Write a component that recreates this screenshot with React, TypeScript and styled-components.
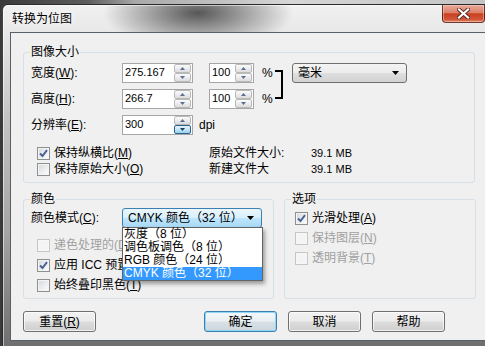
import React from 'react';
import styled, { createGlobalStyle, css } from 'styled-components';

const Global = createGlobalStyle`
  html, body { margin: 0; padding: 0; }
  body {
    background: #6a6a6a;
    font-family: "Liberation Sans", "Noto Sans CJK SC", sans-serif;
  }
`;

const CJK = `"Liberation Sans", "Noto Sans CJK SC", sans-serif`;

const Screen = styled.div`
  width: 485px;
  height: 346px;
  overflow: hidden;
  background: linear-gradient(90deg, #3a3a3a 0, #5c5c5c 18%, #a9a9a9 28%, #d6d6d6 60%, #c4c4c4 100%);
`;

const Window = styled.div`
  margin: 4px 0 0 2px;
  width: 490px;
  height: 360px;
  box-sizing: border-box;
  border: 1px solid rgba(25, 25, 25, 0.8);
  border-radius: 6px 6px 0 0;
  display: flex;
  flex-direction: column;
  background:
    radial-gradient(ellipse 95px 36px at 195px 8px, rgba(60, 60, 60, 0.85), rgba(60, 60, 60, 0) 100%),
    linear-gradient(180deg, #f1f1f1 0px, #e8e8e8 26px, #c4c4c4 110px, #a3a3a3 230px, #6f6f6f 340px);
  box-shadow: inset 1px 1px 0 rgba(255, 255, 255, 0.55);
`;

const TitleBar = styled.div`
  height: 27px;
  flex: none;
  display: flex;
  align-items: center;
  padding-left: 9px;
`;

const Title = styled.span`
  font-family: ${CJK};
  font-size: 12px;
  line-height: 14px;
  color: #000;
  text-shadow: 0 0 6px rgba(255, 255, 255, 0.95), 0 0 10px rgba(255, 255, 255, 0.8);
`;

const CloseButton = styled.div`
  align-self: flex-start;
  margin-left: auto;
  margin-right: 6px;
  width: 43px;
  height: 18px;
  box-sizing: border-box;
  border: 1px solid rgba(70, 20, 15, 0.75);
  border-top: none;
  border-radius: 0 0 4px 4px;
  background: linear-gradient(180deg, #e9aa9c 0%, #dc8069 45%, #c9401f 52%, #d2573a 85%, #e08a6a 100%);
  display: flex;
  align-items: center;
  justify-content: center;
  box-shadow: inset 0 0 0 1px rgba(255, 220, 210, 0.45);
`;

const Client = styled.div`
  margin-left: 7px;
  height: 309px;
  flex: none;
  box-sizing: border-box;
  border: 1px solid #58616a;
  background: #f0f0f0;
  padding: 12px 0 0 12px;
  font-family: ${CJK};
  font-size: 12px;
  color: #000;
`;

const Content = styled.div`
  width: 453px;
  display: flex;
  flex-direction: column;
`;

const Group = styled.fieldset<{ $w: number; $h: number; $pl?: number }>`
  margin: 0;
  box-sizing: border-box;
  width: ${p => p.$w}px;
  height: ${p => p.$h}px;
  border: 1px solid #d5dfe5;
  border-radius: 3px;
  padding: 0 7px 0 ${p => p.$pl ?? 7}px;
  min-width: 0;
`;

const Legend = styled.legend`
  padding: 0 1px;
  margin-left: -1px;
  font-size: 12px;
  line-height: 14px;
`;

const SizeGrid = styled.div`
  display: grid;
  grid-template-columns: 91px 87px 53px 13px 17px 115px;
  grid-template-rows: 20px 20px 20px;
  row-gap: 6px;
  align-items: center;
  margin-top: 4px;
`;

const Label = styled.span<{ $disabled?: boolean }>`
  font-size: 12px;
  line-height: 14px;
  white-space: nowrap;
  color: ${p => (p.$disabled ? '#a0a0a0' : '#000')};
`;

const RowLabel = styled(Label)`
  grid-column: 1;
`;

const Key = styled.span`
  text-decoration: underline;
  text-underline-offset: 1px;
`;

const SpinBox = styled.div<{ $w: number }>`
  width: ${p => p.$w}px;
  height: 20px;
  box-sizing: border-box;
  border: 1px solid #a6a6a6;
  background: #fff;
  display: flex;
  align-items: stretch;
`;

const SpinValue = styled.span`
  flex: 1;
  padding-left: 2px;
  font-family: "Liberation Sans", sans-serif;
  font-size: 11px;
  line-height: 17px;
  color: #000;
`;

const SpinCol = styled.div`
  width: 17px;
  display: flex;
  flex-direction: column;
  margin-right: 1px;
`;

const SpinBtn = styled.div<{ $pressed?: boolean }>`
  flex: 1;
  box-sizing: border-box;
  border: 1px solid #b9b9b9;
  border-radius: 2px;
  background: linear-gradient(180deg, #fbfbfb 0%, #ececec 50%, #dcdcdc 100%);
  display: flex;
  align-items: center;
  justify-content: center;
  ${p =>
    p.$pressed &&
    css`
      border-color: #2c628b;
      background: linear-gradient(180deg, #e5f4fc 0%, #c4e5f6 50%, #98d1ef 100%);
    `}
`;

const Unit = styled.span`
  font-family: "Liberation Sans", sans-serif;
  font-size: 12px;
  line-height: 14px;
`;

const Bracket = styled.div`
  grid-column: 5;
  grid-row: 1 / span 2;
  align-self: start;
  margin-top: 7px;
  width: 8px;
  height: 29px;
  box-sizing: border-box;
  border: 2px solid #000;
  border-left: none;
`;

const DpiCell = styled.div`
  grid-column: 2 / span 2;
  display: flex;
  align-items: center;
  gap: 6px;
`;

const Combo = styled.div<{ $w: number; $focus?: boolean }>`
  position: relative;
  width: ${p => p.$w}px;
  height: 20px;
  box-sizing: border-box;
  border: 1px solid #707070;
  border-radius: 3px;
  background: linear-gradient(180deg, #f4f4f4 0%, #ececec 48%, #dedede 52%, #d2d2d2 100%);
  display: flex;
  align-items: center;
  justify-content: space-between;
  padding: 0 7px 0 5px;
  font-size: 12px;
  line-height: 14px;
  white-space: nowrap;
  ${p =>
    p.$focus &&
    css`
      border-color: #3c7fb1;
      background: linear-gradient(180deg, #eaf6fd 0%, #d9f0fc 48%, #bee6fd 52%, #a7d9f5 100%);
    `}
`;

const Popup = styled.div`
  position: absolute;
  top: 18px;
  left: -1px;
  width: 141px;
  box-sizing: border-box;
  border: 1px solid #646464;
  background: #fff;
  box-shadow: 2px 3px 4px rgba(0, 0, 0, 0.35);
  z-index: 5;
  padding: 0;
`;

const PopupItem = styled.div<{ $sel?: boolean }>`
  height: 13px;
  line-height: 13px;
  padding-left: 1px;
  font-size: 12px;
  white-space: nowrap;
  color: #000;
  ${p =>
    p.$sel &&
    css`
      background: #3399ff;
      color: #fff;
    `}
`;

const CheckGrid = styled.div`
  display: grid;
  grid-template-columns: 172px 102px auto;
  grid-auto-rows: 16px;
  align-items: center;
  margin: 10px 0 0 6px;
`;

const CheckList = styled.div<{ $mt: number; $ml: number }>`
  display: flex;
  flex-direction: column;
  margin: ${p => p.$mt}px 0 0 ${p => p.$ml}px;
`;

const CheckRow = styled.div<{ $h: number }>`
  height: ${p => p.$h}px;
  display: flex;
  align-items: center;
  gap: 4px;
`;

const Box = styled.span<{ $disabled?: boolean }>`
  width: 13px;
  height: 13px;
  flex: none;
  box-sizing: border-box;
  border: 1px solid ${p => (p.$disabled ? '#c6c6c6' : '#8e8f8f')};
  background: ${p =>
    p.$disabled
      ? '#f4f4f4'
      : 'linear-gradient(135deg, #d3d6db 0%, #eceef0 55%, #fdfdfd 100%)'};
  box-shadow: inset 0 0 0 1px ${p => (p.$disabled ? '#f7f7f7' : '#f4f4f4')};
  display: flex;
  align-items: center;
  justify-content: center;
`;

const Info = styled.span<{ $small?: boolean }>`
  font-size: ${p => (p.$small ? 11 : 12)}px;
  line-height: 14px;
  white-space: nowrap;
  font-family: "Liberation Sans", "Noto Sans CJK SC", sans-serif;
`;

const GroupRow = styled.div`
  display: flex;
  gap: 10px;
  margin-top: 9px;
`;

const ModeRow = styled.div`
  display: flex;
  align-items: center;
  height: 20px;
  margin-top: 2px;
`;

const ModeLabel = styled(Label)`
  width: 91px;
`;

const ButtonRow = styled.div`
  display: flex;
  gap: 11px;
  margin-top: 12px;
`;

const Button = styled.div<{ $default?: boolean; $push?: number }>`
  width: 73px;
  height: 21px;
  box-sizing: border-box;
  border: 1px solid #707070;
  border-radius: 3px;
  background: linear-gradient(180deg, #f2f2f2 0%, #ebebeb 48%, #dddddd 52%, #cfcfcf 100%);
  box-shadow: inset 0 0 0 1px rgba(255, 255, 255, 0.7);
  display: flex;
  align-items: center;
  justify-content: center;
  font-size: 12px;
  line-height: 14px;
  margin-left: ${p => p.$push ?? 0}px;
  ${p =>
    p.$default &&
    css`
      border-color: #3c7fb1;
      box-shadow: inset 0 0 0 1px #8fd7f7;
      background: linear-gradient(180deg, #f3f7f9 0%, #e9eff2 48%, #d9e1e6 52%, #ccd6dc 100%);
    `}
`;

const ArrowUp = () => (
  <svg width="5" height="3" viewBox="0 0 5 3">
    <path d="M0 3 L2.5 0 L5 3 Z" fill="#5a6d96" />
  </svg>
);

const ArrowDown = ({ color = '#5a6d96' }: { color?: string }) => (
  <svg width="5" height="3" viewBox="0 0 5 3">
    <path d="M0 0 L5 0 L2.5 3 Z" fill={color} />
  </svg>
);

const ComboArrow = () => (
  <svg width="7" height="4" viewBox="0 0 7 4">
    <path d="M0 0 L7 0 L3.5 4 Z" fill="#000" />
  </svg>
);

const Spin = ({ w, value, pressedDown }: { w: number; value: string; pressedDown?: boolean }) => (
  <SpinBox $w={w}>
    <SpinValue>{value}</SpinValue>
    <SpinCol>
      <SpinBtn>
        <ArrowUp />
      </SpinBtn>
      <SpinBtn $pressed={pressedDown}>
        <ArrowDown color={pressedDown ? '#1f3f66' : '#5a6d96'} />
      </SpinBtn>
    </SpinCol>
  </SpinBox>
);

const Check = ({
  checked,
  disabled,
  children,
  h = 16,
}: {
  checked?: boolean;
  disabled?: boolean;
  children: React.ReactNode;
  h?: number;
}) => (
  <CheckRow $h={h}>
    <Box $disabled={disabled}>
      {checked && (
        <svg width="9" height="9" viewBox="0 0 9 9">
          <path d="M1 4.5 L3.5 7 L8 1.2" fill="none" stroke="#4a5f97" strokeWidth="1.9" />
        </svg>
      )}
    </Box>
    <Label $disabled={disabled}>{children}</Label>
  </CheckRow>
);

const K = ({ c }: { c: string }) => (
  <>
    (<Key>{c}</Key>)
  </>
);

export default function App() {
  return (
    <>
      <Global />
      <Screen>
        <Window>
          <TitleBar>
            <Title>转换为位图</Title>
            <CloseButton>
              <svg width="13" height="11" viewBox="0 0 13 11">
                <path d="M2 1.5 L11 9.5 M11 1.5 L2 9.5" stroke="#5a2a22" strokeWidth="4" strokeLinecap="square" />
                <path d="M2 1.5 L11 9.5 M11 1.5 L2 9.5" stroke="#ffffff" strokeWidth="2.2" strokeLinecap="square" />
              </svg>
            </CloseButton>
          </TitleBar>
          <Client>
            <Content>
              <Group $w={452} $h={138}>
                <Legend>图像大小</Legend>
                <SizeGrid>
                  <RowLabel>
                    宽度<K c="W" />:
                  </RowLabel>
                  <Spin w={71} value="275.167" />
                  <Spin w={45} value="100" />
                  <Unit>%</Unit>
                  <Bracket />
                  <Combo $w={115}>
                    <span>毫米</span>
                    <ComboArrow />
                  </Combo>

                  <RowLabel>
                    高度<K c="H" />:
                  </RowLabel>
                  <Spin w={71} value="266.7" />
                  <Spin w={45} value="100" />
                  <Unit>%</Unit>

                  <RowLabel>
                    分辨率<K c="E" />:
                  </RowLabel>
                  <DpiCell>
                    <Spin w={71} value="300" pressedDown />
                    <Unit>dpi</Unit>
                  </DpiCell>
                </SizeGrid>
                <CheckGrid>
                  <Check checked>
                    保持纵横比<K c="M" />
                  </Check>
                  <Info>原始文件大小:</Info>
                  <Info $small>39.1 MB</Info>
                  <Check>
                    保持原始大小<K c="O" />
                  </Check>
                  <Info>新建文件大</Info>
                  <Info $small>39.1 MB</Info>
                </CheckGrid>
              </Group>

              <GroupRow>
                <Group $w={251} $h={107}>
                  <Legend>颜色</Legend>
                  <ModeRow>
                    <ModeLabel>
                      颜色模式<K c="C" />:
                    </ModeLabel>
                    <Combo $w={140} $focus>
                      <span>CMYK 颜色（32 位）</span>
                      <ComboArrow />
                      <Popup>
                        <PopupItem>灰度（8 位）</PopupItem>
                        <PopupItem>调色板调色（8 位）</PopupItem>
                        <PopupItem>RGB 颜色（24 位）</PopupItem>
                        <PopupItem $sel>CMYK 颜色（32 位）</PopupItem>
                      </Popup>
                    </Combo>
                  </ModeRow>
                  <CheckList $mt={7} $ml={6}>
                    <Check disabled h={20}>
                      递色处理的<K c="D" />
                    </Check>
                    <Check checked h={20}>
                      应用 ICC 预置文件<K c="I" />
                    </Check>
                    <Check h={20}>
                      始终叠印黑色<K c="T" />
                    </Check>
                  </CheckList>
                </Group>

                <Group $w={192} $h={107}>
                  <Legend>选项</Legend>
                  <CheckList $mt={2} $ml={3}>
                    <Check checked h={20}>
                      光滑处理<K c="A" />
                    </Check>
                    <Check disabled h={20}>
                      保持图层<K c="N" />
                    </Check>
                    <Check disabled h={20}>
                      透明背景<K c="T" />
                    </Check>
                  </CheckList>
                </Group>
              </GroupRow>

              <ButtonRow>
                <Button>
                  重置<K c="R" />
                </Button>
                <Button $default $push={97}>
                  确定
                </Button>
                <Button>取消</Button>
                <Button>帮助</Button>
              </ButtonRow>
            </Content>
          </Client>
        </Window>
      </Screen>
    </>
  );
}
